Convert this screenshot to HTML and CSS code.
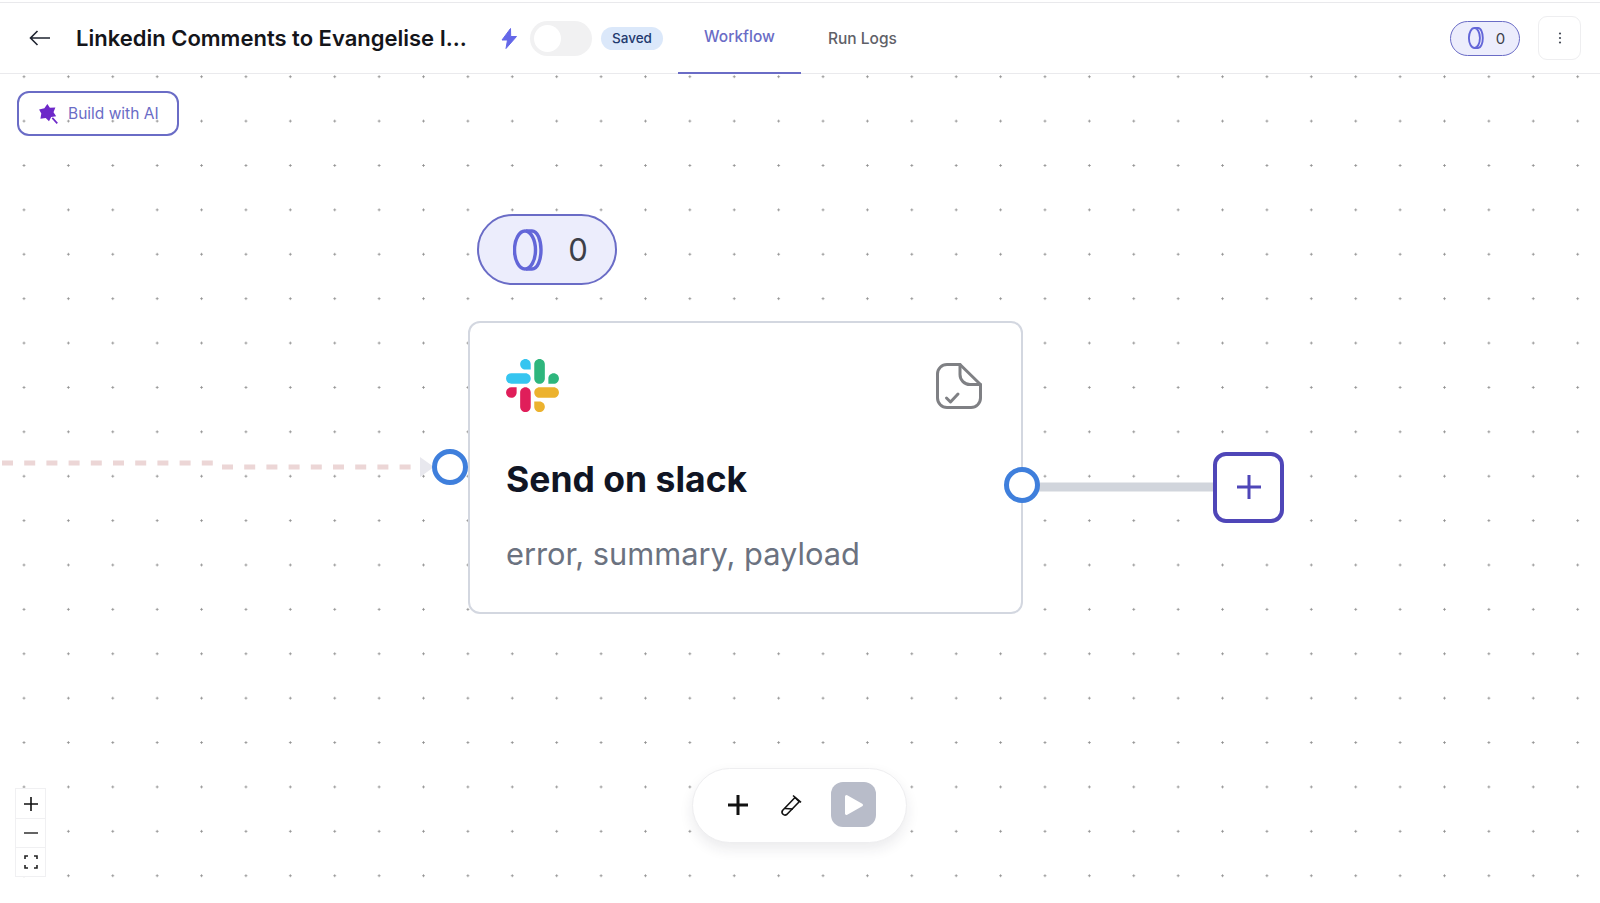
FILE: index.html
```html
<!DOCTYPE html>
<html lang="en">
<head>
    <meta charset="UTF-8">
    <meta name="viewport" content="width=device-width, initial-scale=1.0">
    <title>Workflow</title>
    <link rel="stylesheet" href="styles.css">
</head>
<body>
    <header class="topbar">
        <button class="back-btn" aria-label="Back">
            <svg width="22" height="16" viewBox="0 0 22 16" fill="none" stroke="#1f2430" stroke-width="1.6"><path d="M21 8H1.5M8.5 1 1.5 8l7 7"/></svg>
        </button>
        <h1 class="title">Linkedin Comments to Evangelise I...</h1>
        <svg class="bolt" width="16" height="21" viewBox="0 0 16 21"><path d="M9.5 0.5 1 12h5.5L5 20.5 15.5 8.5H9.7z" fill="#6467e8" stroke="#6467e8" stroke-linejoin="round"/></svg>
        <div class="toggle"><span class="knob"></span></div>
        <span class="saved">Saved</span>
        <nav class="tabs">
            <a class="tab active">Workflow</a>
            <a class="tab">Run Logs</a>
        </nav>
        <div class="top-right">
            <div class="coins">
                <svg width="16" height="22" viewBox="0 0 30 42" fill="none" stroke="#6366d8" stroke-width="3.6"><ellipse cx="12" cy="21" rx="10.5" ry="19"/><path d="M13 2h6c5.5 0 9 9 9 19s-3.5 19-9 19h-6"/></svg>
                <span>0</span>
            </div>
            <button class="menu-btn" aria-label="Menu">
                <svg width="4" height="12" viewBox="0 0 4 12" fill="#444a55"><circle cx="2" cy="1.5" r="1.1"/><circle cx="2" cy="6" r="1.1"/><circle cx="2" cy="10.5" r="1.1"/></svg>
            </button>
        </div>
    </header>

    <main class="canvas">
        <button class="build-ai">
            <svg width="22" height="22" viewBox="0 0 20 20"><path d="M8.5 1l2.3 3.3 5-.3-1.700 4.500 2.400 3.500-4.500.7-2 3.800-3-2.900-4.800.8.800-4.800L1 6l4.800-1.300z" fill="#6d28c9"/><path d="M13 13.5l4.500 5" stroke="#6d28c9" stroke-width="1.5"/></svg>
            Build with AI
        </button>

        <!-- edges -->
        <svg class="edges" width="1600" height="829" fill="none">
            <path d="M2 389H213" stroke="#ecd6d6" stroke-width="5" stroke-dasharray="11 11.2"/>
            <path d="M222 393H412" stroke="#ecd6d6" stroke-width="5" stroke-dasharray="11 11.2"/>
            <path d="M420 383l14 10-14 10z" fill="#e8e8ee"/>
            <path d="M1035 413H1216" stroke="#d1d5dc" stroke-width="9"/>
        </svg>

        <div class="coins-big">
            <svg width="30" height="42" viewBox="0 0 30 42" fill="none" stroke="#6366d8" stroke-width="3.4"><ellipse cx="12" cy="21" rx="10.5" ry="19"/><path d="M13 2h6c5.5 0 9 9 9 19s-3.5 19-9 19h-6"/></svg>
            <span>0</span>
        </div>

        <div class="node">
            <div class="node-top">
                <svg width="53" height="53" viewBox="0 0 2447.6 2452.5">
                    <path d="m897.4 0c-135.3.1-244.8 109.9-244.7 245.2-.1 135.3 109.5 245.1 244.8 245.2h244.8v-245.1c.1-135.3-109.5-245.1-244.9-245.3m0 654h-652.6c-135.3.1-244.9 109.9-244.8 245.2-.2 135.3 109.4 245.1 244.7 245.3h652.7c135.3-.1 244.9-109.9 244.8-245.2.1-135.4-109.5-245.2-244.8-245.3z" fill="#36c5f0"/>
                    <path d="m2447.6 899.2c.1-135.3-109.5-245.1-244.8-245.2-135.3.1-244.9 109.9-244.8 245.2v245.3h244.8c135.3-.1 244.9-109.9 244.8-245.3zm-652.7 0v-654c.1-135.2-109.4-245-244.7-245.2-135.3.1-244.9 109.9-244.8 245.2v654c-.2 135.3 109.4 245.1 244.7 245.3 135.3-.1 244.9-109.9 244.8-245.3z" fill="#2eb67d"/>
                    <path d="m1550.1 2452.5c135.3-.1 244.9-109.9 244.8-245.2.1-135.3-109.5-245.1-244.8-245.2h-244.8v245.2c-.1 135.2 109.5 245 244.8 245.2zm0-654.1h652.7c135.3-.1 244.9-109.9 244.8-245.2.2-135.3-109.4-245.1-244.7-245.3h-652.7c-135.3.1-244.9 109.9-244.8 245.2-.1 135.4 109.4 245.2 244.7 245.3z" fill="#ecb22e"/>
                    <path d="m0 1553.2c-.1 135.3 109.5 245.1 244.8 245.2 135.3-.1 244.9-109.9 244.8-245.2v-245.2h-244.8c-135.3.1-244.9 109.9-244.8 245.2zm652.7 0v654c-.2 135.3 109.4 245.1 244.7 245.3 135.3-.1 244.9-109.9 244.8-245.2v-653.9c.2-135.3-109.4-245.1-244.7-245.3-135.4 0-244.9 109.8-244.8 245.1z" fill="#e01e5a"/>
                </svg>
                <svg width="48" height="48" viewBox="0 0 48 48" fill="none" stroke="#7f8084" stroke-width="3" stroke-linecap="round" stroke-linejoin="round">
                    <path d="M25 2.5H12A9.5 9.5 0 0 0 2.5 12v24a9.5 9.5 0 0 0 9.5 9.5h24a9.5 9.5 0 0 0 9.5-9.500V22.5z"/>
                    <path d="M25 2.5v10a10 10 0 0 0 10 10h10.5"/>
                    <path d="M11.5 36l4 4 7.5-8"/>
                </svg>
            </div>
            <h2 class="node-title">Send on slack</h2>
            <p class="node-sub">error, summary, payload</p>
        </div>

        <span class="handle handle-in"></span>
        <span class="handle handle-out"></span>

        <button class="add-node" aria-label="Add">
            <svg width="26" height="26" viewBox="0 0 26 26" stroke="#4f46b8" stroke-width="3"><path d="M13 1v24M1 13h24"/></svg>
        </button>

        <div class="toolbar">
            <svg width="24" height="24" viewBox="0 0 24 24" stroke="#111" stroke-width="3"><path d="M12 2v20M2 12h20"/></svg>
            <svg width="24" height="24" viewBox="0 0 24 24" fill="none" stroke="#111" stroke-width="1.6" stroke-linejoin="round"><path d="M16 4.5 3.5 17.5a3 3 0 0 0 4.3 4L20.2 8.8z"/><path d="M14 2.5l8 6.8"/><path d="M6 15.5l8 .5"/></svg>
            <button class="play-btn" aria-label="Run">
                <svg width="20" height="22" viewBox="0 0 20 22"><path d="M2.5 2.5 17.5 11 2.5 19.5z" fill="#fff" stroke="#fff" stroke-width="3" stroke-linejoin="round"/></svg>
            </button>
        </div>

        <div class="zoom-ctl">
            <button aria-label="Zoom in"><svg width="14" height="14" viewBox="0 0 14 14" stroke="#111" stroke-width="1.6"><path d="M7 0v14M0 7h14"/></svg></button>
            <button aria-label="Zoom out"><svg width="14" height="14" viewBox="0 0 14 14" stroke="#222" stroke-width="1.4"><path d="M0 7h14"/></svg></button>
            <button aria-label="Fit"><svg width="14" height="14" viewBox="0 0 14 14" fill="none" stroke="#222" stroke-width="1.6"><path d="M1 4V1h3M10 1h3v3M13 10v3h-3M4 13H1v-3"/></svg></button>
        </div>
    </main>
</body>
</html>
```

FILE: styles.css
```css
* {
    box-sizing: border-box;
}

html, body {
    height: 100%;
}

body {
    margin: 0;
    font-family: Inter, "Liberation Sans", sans-serif;
    background-color: #fff;
    color: #111;
    display: flex;
    flex-direction: column;
    overflow: hidden;
}

button {
    font-family: inherit;
    background: none;
    border: none;
    padding: 0;
    cursor: pointer;
}

/* top bar */
.topbar {
    height: 72px;
    margin-top: 2px;
    border-top: 1px solid #e9e9ec;
    border-bottom: 1px solid #eaeaed;
    padding-left: 29px;
    display: flex;
    align-items: center;
    flex-shrink: 0;
}

.back-btn {
    display: flex;
    margin-right: 25px;
}

.title {
    margin: 0 26px 0 0;
    width: 391px;
    font-size: 22px;
    font-weight: 600;
    color: #14151a;
    white-space: nowrap;
}

.bolt {
    margin-left: 8px;
}

.toggle {
    width: 62px;
    height: 35px;
    margin-left: 13px;
    padding: 4px;
    border-radius: 18px;
    background-color: #f1f1f2;
}

.knob {
    display: block;
    width: 27px;
    height: 27px;
    border-radius: 50%;
    background-color: #fff;
}

.saved {
    margin-left: 9px;
    padding: 0 11px;
    height: 23px;
    line-height: 23px;
    border-radius: 12px;
    background-color: #dbe8fa;
    color: #1f3a6e;
    font-size: 13.5px;
    font-weight: 500;
}

.tabs {
    display: flex;
    align-self: stretch;
    margin-left: 15px;
}

.tab {
    width: 123px;
    display: flex;
    align-items: center;
    justify-content: center;
    margin-bottom: -1px;
    padding-top: 2px;
    font-size: 15.5px;
    font-weight: 500;
    color: #5f6168;
    border-bottom: 2px solid transparent;
}

.tab.active {
    color: #6a6cc6;
    border-bottom-color: #6a6cc6;
    padding-top: 0;
    padding-bottom: 2px;
}

.tab + .tab {
    margin-left: 4px;
    width: 115px;
}

.top-right {
    margin-left: auto;
    margin-right: 19px;
    display: flex;
    align-items: center;
    gap: 18px;
}

.coins {
    width: 70px;
    height: 35px;
    padding-left: 3px;
    border: 1px solid #6a6cc6;
    border-radius: 18px;
    background-color: #ecedfc;
    display: flex;
    align-items: center;
    justify-content: center;
    gap: 12px;
    font-size: 15px;
    color: #3c3f48;
}

.menu-btn {
    width: 43px;
    height: 44px;
    border: 1px solid #eeeef0;
    border-radius: 9px;
    display: flex;
    align-items: center;
    justify-content: center;
}

/* canvas */
.canvas {
    position: relative;
    flex: 1;
    background-image: radial-gradient(circle, #8f8f8f 0.9px, transparent 1.3px);
    background-size: 44.4px 44.4px;
    background-position: 1.8px -19.5px;
}

.edges {
    position: absolute;
    left: 0;
    top: 0;
}

.build-ai {
    position: absolute;
    left: 17px;
    top: 17px;
    width: 162px;
    height: 45px;
    border: 2px solid #6a6cc6;
    border-radius: 12px;
    display: flex;
    align-items: center;
    gap: 8px;
    padding-left: 19px;
    font-size: 15.5px;
    color: #6a6cc6;
}

.coins-big {
    position: absolute;
    left: 477px;
    top: 140px;
    width: 140px;
    height: 71px;
    padding-left: 7px;
    border: 2.5px solid #6a6cc6;
    border-radius: 36px;
    background-color: #ecedfc;
    display: flex;
    align-items: center;
    justify-content: center;
    gap: 25px;
    font-size: 31px;
    color: #3c3f48;
}

.node {
    position: absolute;
    left: 468px;
    top: 247px;
    width: 555px;
    height: 293px;
    padding: 36px 38px 0 36px;
    background-color: #fff;
    border: 2px solid #d3d7e0;
    border-radius: 12px;
}

.node-top {
    display: flex;
    justify-content: space-between;
    align-items: center;
}

.node-title {
    margin: 44px 0 0;
    font-size: 35.5px;
    line-height: 48px;
    font-weight: 700;
    color: #101524;
}

.node-sub {
    margin: 29px 0 0;
    font-size: 30.8px;
    line-height: 42px;
    color: #6b7280;
}

.handle {
    position: absolute;
    width: 36px;
    height: 36px;
    border: 5px solid #3f7fdc;
    border-radius: 50%;
    background-color: #fff;
}

.handle-in {
    left: 432px;
    top: 375px;
}

.handle-out {
    left: 1004px;
    top: 393px;
}

.add-node {
    position: absolute;
    left: 1213px;
    top: 378px;
    width: 71px;
    height: 71px;
    padding-bottom: 2px;
    border: 4px solid #4f46b8;
    border-radius: 13px;
    background-color: #fff;
    display: flex;
    align-items: center;
    justify-content: center;
}

.toolbar {
    position: absolute;
    left: 692px;
    top: 694px;
    width: 215px;
    height: 75px;
    padding-left: 33px;
    padding-bottom: 2px;
    border: 1px solid #eeeef0;
    border-radius: 38px;
    background-color: #fff;
    box-shadow: 0 6px 14px rgba(30, 30, 60, 0.09);
    display: flex;
    align-items: center;
    gap: 29px;
}

.play-btn {
    width: 45px;
    height: 45px;
    margin-left: -1px;
    border-radius: 12px;
    background-color: #b8bcc9;
    display: flex;
    align-items: center;
    justify-content: center;
}

.zoom-ctl {
    position: absolute;
    left: 15px;
    top: 714px;
    width: 31px;
    border: 1px solid #f0f0f2;
    background-color: #fff;
    display: flex;
    flex-direction: column;
}

.zoom-ctl button {
    height: 29px;
    display: flex;
    align-items: center;
    justify-content: center;
}

.zoom-ctl button + button {
    border-top: 1px solid #f0f0f2;
}
```
